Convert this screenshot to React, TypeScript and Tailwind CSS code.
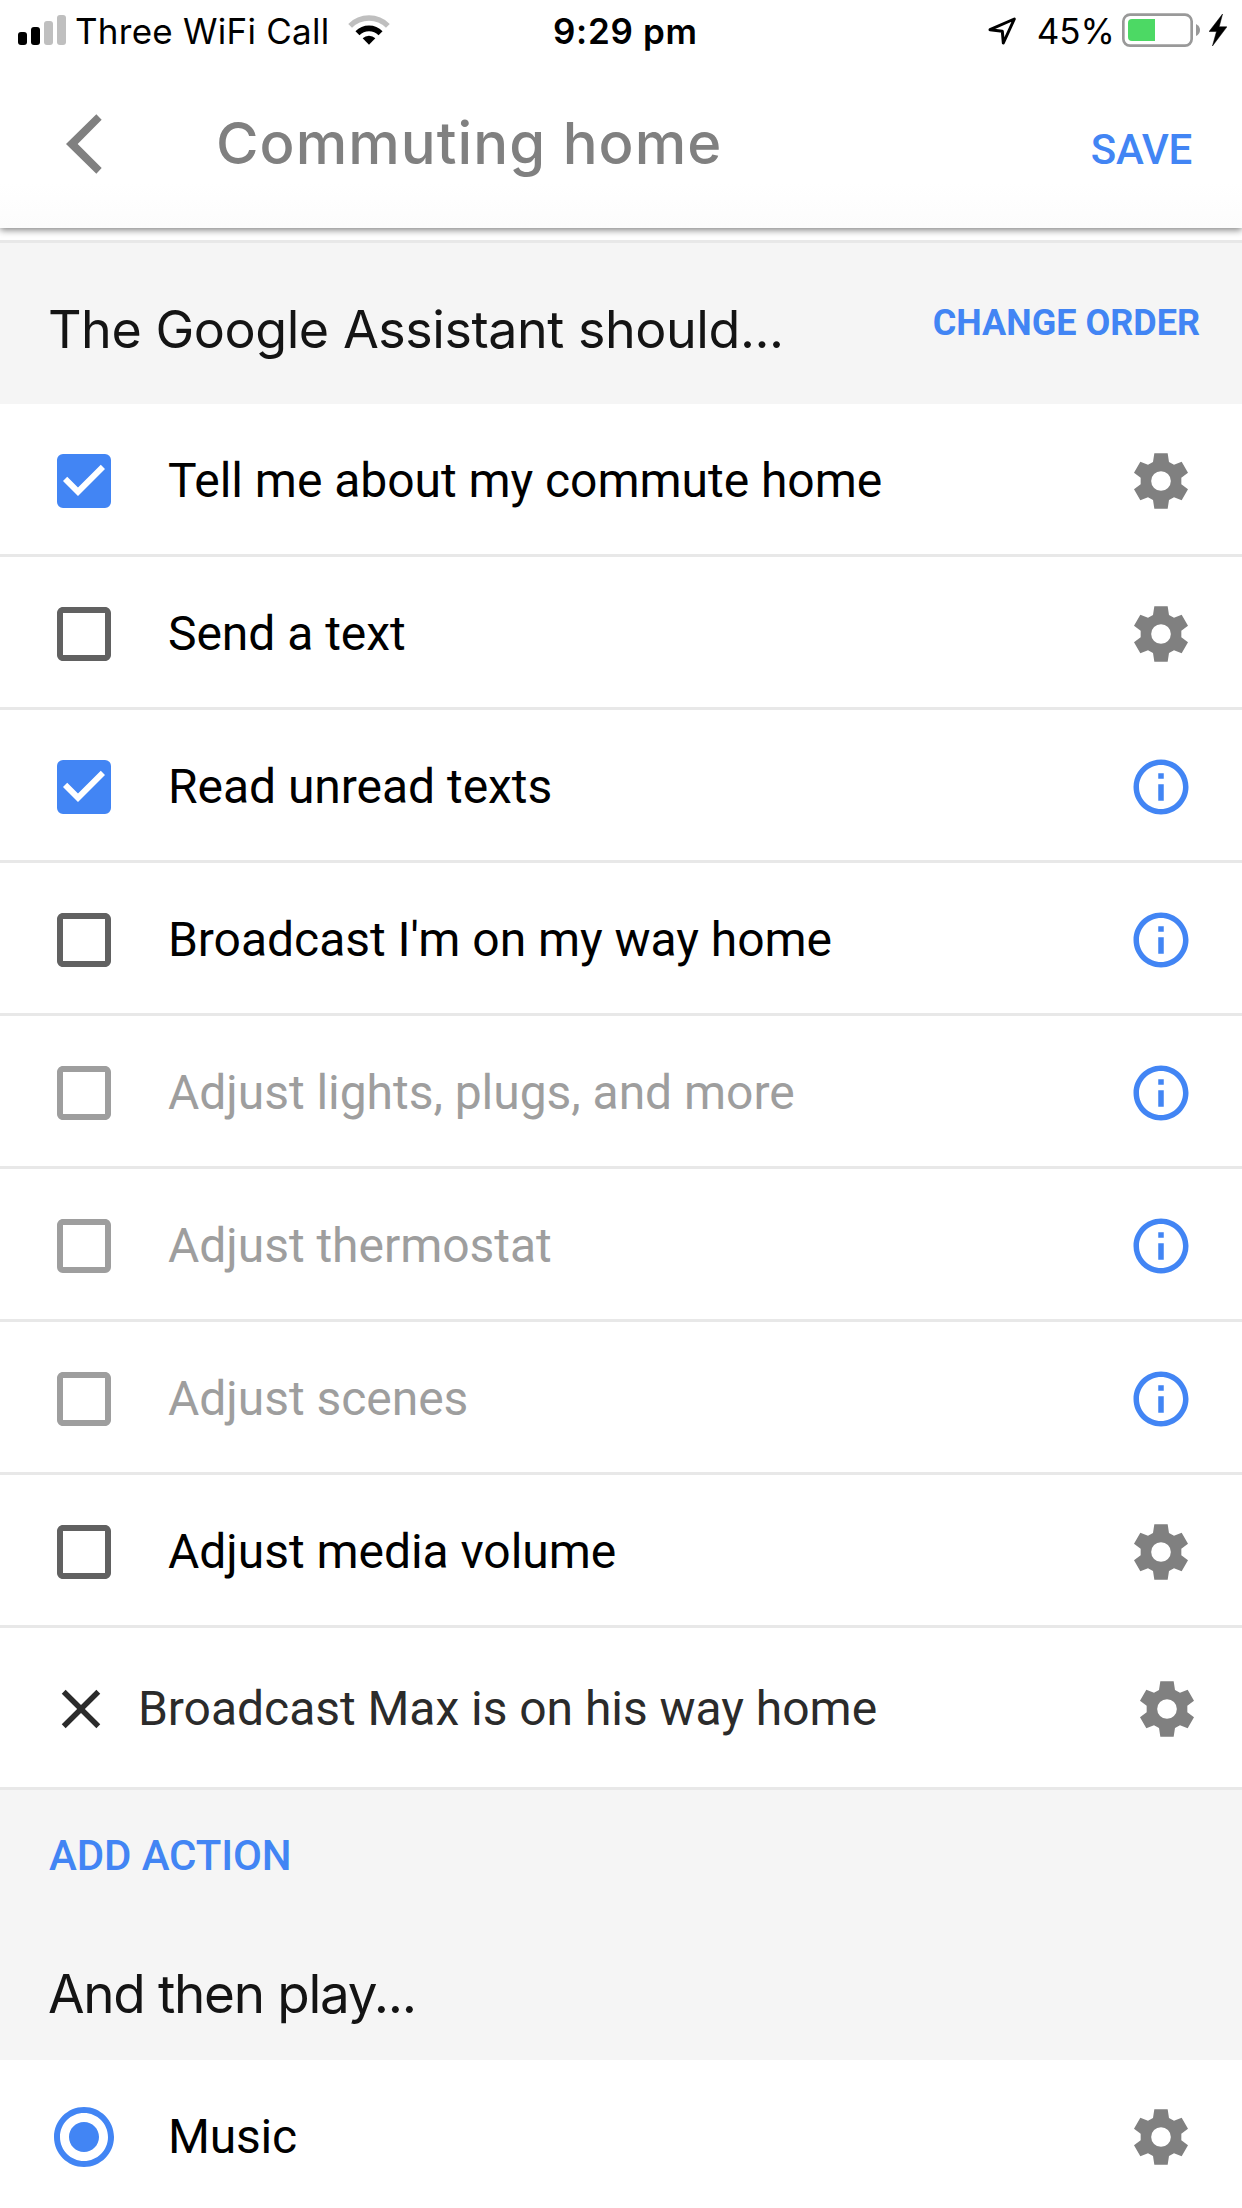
import React, { useState } from "react";
import {
  MdCheckBox,
  MdCheckBoxOutlineBlank,
  MdClose,
  MdInfoOutline,
  MdRadioButtonChecked,
} from "react-icons/md";

interface Action {
  id: number;
  label: string;
  checked: boolean;
  disabled?: boolean;
  icon: "gear" | "info";
}

const initialActions: Action[] = [
  { id: 1, label: "Tell me about my commute home", checked: true, icon: "gear" },
  { id: 2, label: "Send a text", checked: false, icon: "gear" },
  { id: 3, label: "Read unread texts", checked: true, icon: "info" },
  { id: 4, label: "Broadcast I'm on my way home", checked: false, icon: "info" },
  { id: 5, label: "Adjust lights, plugs, and more", checked: false, disabled: true, icon: "info" },
  { id: 6, label: "Adjust thermostat", checked: false, disabled: true, icon: "info" },
  { id: 7, label: "Adjust scenes", checked: false, disabled: true, icon: "info" },
  { id: 8, label: "Adjust media volume", checked: false, icon: "gear" },
];

const Gear: React.FC = () => (
  <svg className="w-[66px] h-[66px] text-[#808080]" viewBox="-99 -99 198 198" fill="currentColor">
    <path
      fillRule="evenodd"
      d="M-20-83H20L24-57 39-49 62-58 81-25 61-10V10L81 25 62 58 39 49 24 57 20 83H-20L-24 57-39 49-62 58-81 25-61 10V-10L-81-25-62-58-39-49-24-57ZM0-29.500A29.500 29.500 0 1 0 0 29.500 29.500 29.500 0 1 0 0-29.500Z"
    />
  </svg>
);

const StatusBar: React.FC = () => (
  <div className="flex items-center h-[62px] font-['Inter',sans-serif] text-[35px] leading-none text-black">
    <div className="flex items-center w-[553px] pl-[18px]">
      <div className="flex items-end gap-1 h-[30px] -mt-[2px]">
        <div className="w-[9px] h-[13px] rounded-[3px] bg-black" />
        <div className="w-[9px] h-[18px] rounded-[3px] bg-black" />
        <div className="w-[9px] h-6 rounded-[3px] bg-[#bfbfbf]" />
        <div className="w-[9px] h-[30px] rounded-[3px] bg-[#bfbfbf]" />
      </div>
      <span className="ml-[9px] tracking-[0.25px] whitespace-nowrap">Three WiFi Call</span>
      <svg className="w-[42px] h-[30px] ml-[19px] -mt-[2px]" viewBox="0 0 126 90" fill="none">
        <path d="M6.400 32.400A80 80 0 0 1 119.600 32.400" stroke="#bfbfbf" strokeWidth="16" />
        <path d="M28.400 54.400A49 49 0 0 1 97.600 54.400" stroke="#000" strokeWidth="17" />
        <path d="M63 89L44 70A27 27 0 0 1 82 70Z" fill="#000" />
      </svg>
    </div>
    <span className="font-semibold tracking-[0.7px] whitespace-nowrap">9:29 pm</span>
    <div className="flex items-center ml-auto pr-[15px]">
      <svg className="w-[28px] h-[28px]" viewBox="0 0 84 84" fill="none">
        <path d="M6 38L79 6 46 78 43 43Z" stroke="#000" strokeWidth="9" strokeLinejoin="round" />
      </svg>
      <span className="ml-[21px]">45%</span>
      <svg className="w-[78px] h-[34px] ml-[7px] -mt-[2px]" viewBox="0 0 234 102">
        <rect x="4" y="5" width="205" height="93" rx="20" fill="none" stroke="#999" strokeWidth="8" />
        <path d="M99 18V84H30Q18 84 18 72V30Q18 18 30 18Z" fill="#4cd964" />
        <path d="M222 33Q234 39 234 51T222 69Z" fill="#999" />
      </svg>
      <svg className="w-[18px] h-8 ml-[9px] -mt-[2px]" viewBox="0 0 53 95">
        <path d="M40 0L0 52H22L10 95 53 38H30Z" stroke="#000" strokeWidth="1.500" />
      </svg>
    </div>
  </div>
);

const App: React.FC = () => {
  const [actions, setActions] = useState<Action[]>(initialActions);

  const toggle = (id: number) => {
    setActions(
      actions.map((action) =>
        action.id === id && !action.disabled
          ? { ...action, checked: !action.checked }
          : action
      )
    );
  };

  return (
    <div className="w-[1242px] h-[2208px] overflow-hidden bg-white font-['Roboto',sans-serif]">
      {/* ============= header ============= */}
      <header className="relative z-10 h-[228px] bg-linear-to-b from-white from-80% to-[#fcfcfc] shadow-[0_2px_7px_rgba(0,0,0,0.5)]">
        <StatusBar />
        <div className="flex items-center h-[166px] pl-[66px] pr-[50px]">
          <button aria-label="Back">
            <svg className="w-9 h-[60px] -mt-[2px]" viewBox="0 0 108 180" fill="#808080">
              <path d="M0 90L91 1 107 17 35 90 107 162 91 179Z" />
            </svg>
          </button>
          <h1 className="ml-[114px] -mt-1 font-['Inter',sans-serif] font-[550] text-[58px] leading-none tracking-[1.05px] text-[#808080] whitespace-nowrap">
            Commuting home
          </h1>
          <button className="ml-auto mt-[9px] text-[42px] font-medium leading-none tracking-[-0.3px] text-[#4285f4]">
            SAVE
          </button>
        </div>
      </header>

      {/* ============= assistant actions ============= */}
      <div className="flex justify-between h-[164px] mt-3 pl-12 pr-[42px] border-t-[3px] border-[#e8e8e8] bg-[#f5f5f5]">
        <h2 className="mt-[61px] font-['Inter',sans-serif] text-[52px] leading-none tracking-[-0.45px] text-[#141414] whitespace-nowrap">
          The Google Assistant should...
        </h2>
        <button className="self-start mt-[62px] text-[36px] font-bold leading-none text-[#4285f4] whitespace-nowrap">
          CHANGE ORDER
        </button>
      </div>

      <ul>
        {actions.map((action) => (
          <li
            key={action.id}
            className="flex items-center h-[153px] pt-1 pl-12 pr-12 border-b-[3px] border-[#e8e8e8]"
          >
            <button
              className={action.disabled ? "text-[#9e9e9e]" : action.checked ? "text-[#4285f4]" : "text-[#616161]"}
              onClick={() => toggle(action.id)}
            >
              {action.checked ? <MdCheckBox size={72} /> : <MdCheckBoxOutlineBlank size={72} />}
            </button>
            <span
              className={`ml-12 text-5xl leading-none tracking-[-0.04px] whitespace-nowrap ${
                action.disabled ? "text-[#9e9e9e]" : "text-black"
              }`}
            >
              {action.label}
            </span>
            <button className="ml-auto">
              {action.icon === "gear" ? <Gear /> : <MdInfoOutline size={66} color="#4285f4" />}
            </button>
          </li>
        ))}
      </ul>

      {/* custom action */}
      <div className="flex items-center h-[162px] pt-[3px] pl-12 pr-[42px] border-b-[3px] border-[#e8e8e8]">
        <MdClose size={66} color="#2b2b2b" />
        <span className="ml-6 text-5xl leading-none tracking-[-0.04px] text-[#2b2b2b] whitespace-nowrap">
          Broadcast Max is on his way home
        </span>
        <button className="ml-auto">
          <Gear />
        </button>
      </div>

      <div className="flex flex-col items-start h-[270px] pl-[49px] bg-[#f5f5f5]">
        <button className="mt-[45px] text-[42px] font-medium leading-none tracking-[-0.12px] text-[#4285f4]">
          ADD ACTION
        </button>
        <h2 className="-ml-[1px] mt-[91px] font-['Inter',sans-serif] text-[53px] leading-none tracking-[-1.3px] text-[#141414] whitespace-nowrap">
          And then play...
        </h2>
      </div>

      {/* ============= media ============= */}
      <div className="flex items-center h-[153px] pt-[1px] pl-12 pr-12">
        <MdRadioButtonChecked size={72} color="#4285f4" />
        <span className="ml-12 text-5xl leading-none tracking-[-0.2px] text-black">Music</span>
        <button className="ml-auto">
          <Gear />
        </button>
      </div>
    </div>
  );
};

export default App;
